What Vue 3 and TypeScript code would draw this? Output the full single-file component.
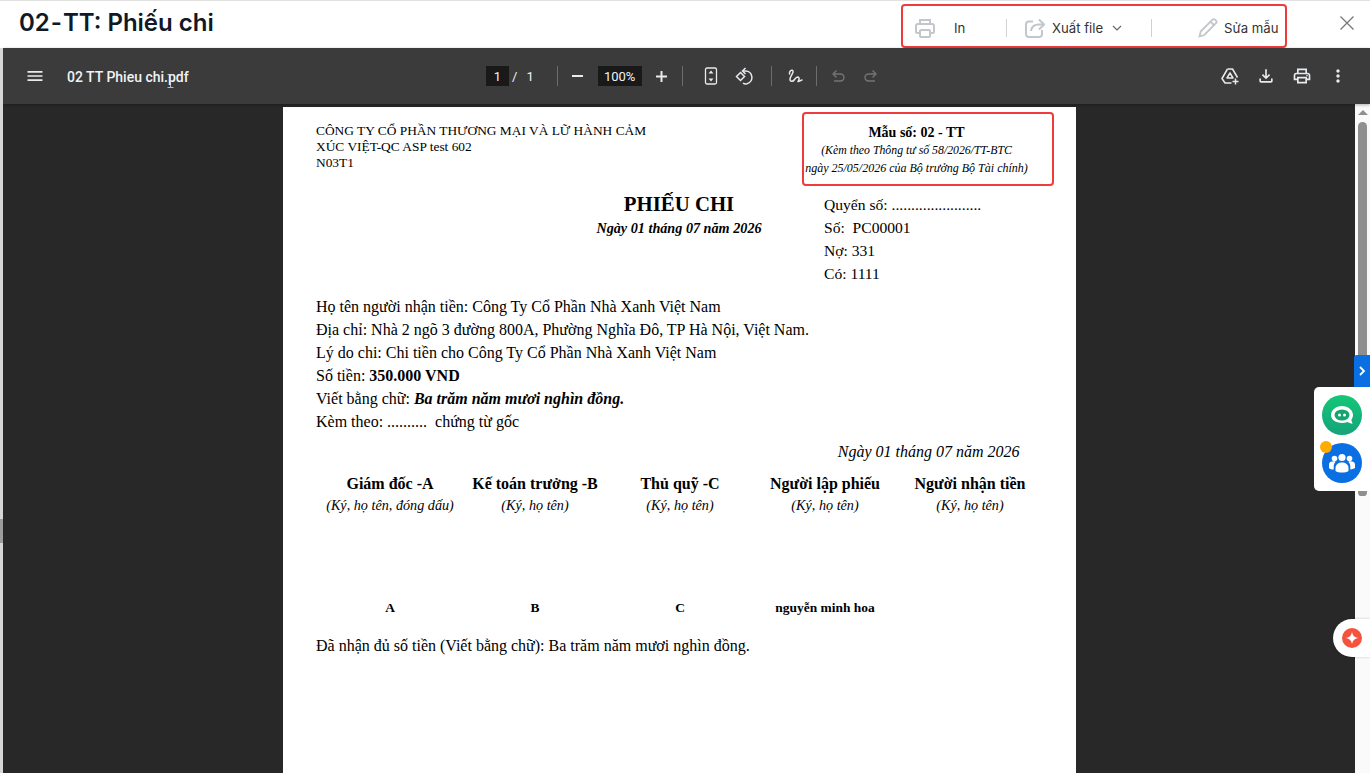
<template>
  <div class="app">
    <div class="modal">
      <header class="head">
        <h1 class="title">02<span class="dash">-</span>TT: Phiếu chi</h1>
        <div class="actions">
          <div class="act act-print">
            <svg class="act-icon" viewBox="0 0 20 20" width="20" height="20" fill="none" stroke="#c3c6ca" stroke-width="2">
              <path d="M5 6V2h10v4" />
              <path d="M5 15H2.500A1.500 1.500 0 0 1 1 13.500V8a2 2 0 0 1 2-2h14a2 2 0 0 1 2 2v5.500a1.500 1.500 0 0 1-1.500 1.500H15" />
              <rect x="5" y="12" width="10" height="7" rx="1" />
            </svg>
            <span class="act-in">In</span>
          </div>
          <i class="act-sep"></i>
          <div class="act act-export">
            <svg viewBox="0 0 20 20" width="20" height="20" fill="none" stroke="#c3c6ca" stroke-width="2">
              <path d="M8 3.500H4a3 3 0 0 0-3 3V16a3 3 0 0 0 3 3h10a3 3 0 0 0 3-3v-4" />
              <path d="M6 13c.5-4 3.500-6.500 8-6.500h4" />
              <path d="M14 1.500l5 5-5 5" />
            </svg>
            <span>Xuất file</span>
            <svg class="chev" viewBox="0 0 10 6" width="10" height="6" fill="none" stroke="#666" stroke-width="1.200">
              <path d="M1 1l4 4 4-4" />
            </svg>
          </div>
          <i class="act-sep"></i>
          <div class="act act-edit">
            <svg viewBox="0 0 20 20" width="20" height="20" fill="none" stroke="#c3c6ca" stroke-width="1.800">
              <path d="M1.500 18.500l1.200-5L14.500 1.700a1.800 1.800 0 0 1 2.500 0l1 1a1.800 1.800 0 0 1 0 2.500L6.300 17z" />
              <path d="M12.500 3.700l3.800 3.800" />
            </svg>
            <span>Sửa mẫu</span>
          </div>
        </div>
        <svg class="close" viewBox="0 0 14 14" width="14" height="14" fill="none" stroke="#777" stroke-width="1.300">
          <path d="M.5.500l13 13M13.500.500l-13 13" />
        </svg>
      </header>

      <div class="toolbar">
        <div class="tb-left">
          <svg class="ic-menu" viewBox="0 0 24 24" width="20" height="20" fill="#e8eaed">
            <path d="M3 18h18v-2H3v2zm0-5h18v-2H3v2zm0-7v2h18V6H3z" />
          </svg>
          <span class="filename">02 TT Phieu chi.pdf</span>
          <svg class="ibeam" viewBox="0 0 7 14" width="7" height="14" fill="none" stroke="#ddd" stroke-width="1">
            <path d="M.5.500h6M3.500.500v13M.5 13.500h6" />
          </svg>
        </div>
        <div class="tb-center">
          <span class="num-box page-box">1</span>
          <span class="slash">/</span>
          <span class="total">1</span>
          <i class="tb-sep sep-a"></i>
          <svg class="ic-minus" viewBox="0 0 11 12" width="11" height="12" fill="#e8eaed"><path d="M0 5h11v2H0z" /></svg>
          <span class="num-box zoom-box">100%</span>
          <svg class="ic-plus" viewBox="0 0 11 11" width="11" height="11" fill="#e8eaed"><path d="M0 4.500h4.500V0h2v4.500H11v2H6.500V11h-2V6.500H0z" /></svg>
          <i class="tb-sep sep-b"></i>
          <svg class="ic-fit" viewBox="0 0 14 18" width="14" height="18" fill="none" stroke="#e8eaed" stroke-width="1.300">
            <rect x="1.500" y="1" width="11" height="16" rx="1.500" />
            <path d="M7 3.500l2.500 3h-5zM7 14.500l2.500-3h-5z" fill="#e8eaed" stroke="none" />
          </svg>
          <svg class="ic-rotate" viewBox="0 0 18 18" width="18" height="18" fill="none" stroke="#e8eaed" stroke-width="1.500">
            <path d="M1.500 9.500l4-4 4 4-4 4z" />
            <path d="M8 4h2.500a6.500 6.500 0 0 1 1.500 12.800c-1.400.3-2.800.1-4-.6" />
            <path d="M10.500 1L7.500 4l3 3" />
          </svg>
          <i class="tb-sep sep-c"></i>
          <svg class="ic-draw" viewBox="0 0 16 16" width="16" height="16" fill="none" stroke="#e8eaed" stroke-width="1.500" stroke-linecap="round">
            <path d="M2.500 6C2 3 5 1 6 3c1 2-3 5-3 8s3 3 4.500.5C8.500 10 11 8 12 10c1 2-2 4-.5 3.500 1-.2 2.500-1.500 3.500-1.500" />
          </svg>
          <i class="tb-sep sep-d"></i>
          <svg class="ic-undo" viewBox="0 0 14 14" width="14" height="14" fill="none" stroke="#747474" stroke-width="1.400">
            <path d="M3 5h6.500a3.500 3.500 0 0 1 0 7H3" />
            <path d="M5.500 1.500L2 5l3.500 3.500" />
          </svg>
          <svg class="ic-redo" viewBox="0 0 14 14" width="14" height="14" fill="none" stroke="#747474" stroke-width="1.400">
            <path d="M11 5H4.500a3.500 3.500 0 0 0 0 7H11" />
            <path d="M8.500 1.500L12 5 8.500 8.500" />
          </svg>
        </div>
        <div class="tb-right">
          <svg viewBox="0 0 20 20" width="20" height="20" fill="none" stroke="#e8eaed" stroke-width="1.500" stroke-linejoin="round">
            <path d="M7.500 3h5l5 8.500" />
            <path d="M7.500 3L2 12.500 5 17h6.500" />
            <path d="M10 7l3 5H7z" />
            <path d="M15.500 12.500v6M12.500 15.500h6" />
          </svg>
          <svg viewBox="0 0 24 24" width="20" height="20" fill="#e8eaed">
            <path d="M18 15v3H6v-3H4v3c0 1.100.9 2 2 2h12c1.100 0 2-.9 2-2v-3h-2zm-1-4l-1.410-1.410L13 12.170V4h-2v8.170L8.410 9.590 7 11l5 5 5-5z" />
          </svg>
          <svg viewBox="0 0 24 24" width="20" height="20" fill="#e8eaed">
            <path d="M19 8h-1V3H6v5H5c-1.660 0-3 1.340-3 3v6h4v4h12v-4h4v-6c0-1.660-1.340-3-3-3zM8 5h8v3H8V5zm8 12v2H8v-4h8v2zm2-2v-2H6v2H4v-4c0-.55.45-1 1-1h14c.55 0 1 .45 1 1v4h-2z" />
            <circle cx="18" cy="11.500" r="1" />
          </svg>
          <svg viewBox="0 0 24 24" width="20" height="20" fill="#e8eaed">
            <path d="M12 8c1.100 0 2-.9 2-2s-.9-2-2-2-2 .9-2 2 .9 2 2 2zm0 2c-1.100 0-2 .9-2 2s.9 2 2 2 2-.9 2-2-.9-2-2-2zm0 6c-1.100 0-2 .9-2 2s.9 2 2 2 2-.9 2-2-.9-2-2-2z" />
          </svg>
        </div>
      </div>

      <div class="viewer">
        <div class="stage">
          <div class="page">
            <div class="doc-top">
              <div class="company">
                CÔNG TY CỔ PHẦN THƯƠNG MẠI VÀ LỮ HÀNH CẢM<br>
                XÚC VIỆT-QC ASP test 602<br>
                N03T1
              </div>
              <div class="form-no">
                <div class="form-no-title">Mẫu số: 02 - TT</div>
                <div class="form-no-line first">(Kèm theo Thông tư số 58/2026/TT-BTC</div>
                <div class="form-no-line">ngày 25/05/2026 của Bộ trưởng Bộ Tài chính)</div>
              </div>
            </div>

            <div class="doc-title-row">
              <div class="doc-title">
                <div class="doc-name">PHIẾU CHI</div>
                <div class="doc-date">Ngày 01 tháng 07 năm 2026</div>
              </div>
              <div class="doc-meta">
                <div>Quyển số: .......................</div>
                <div>Số:&nbsp; PC00001</div>
                <div>Nợ: 331</div>
                <div>Có: 1111</div>
              </div>
            </div>

            <div class="doc-body">
              <div>Họ tên người nhận tiền: Công Ty Cổ Phần Nhà Xanh Việt Nam</div>
              <div>Địa chỉ: Nhà 2 ngõ 3 đường 800A, Phường Nghĩa Đô, TP Hà Nội, Việt Nam.</div>
              <div>Lý do chi: Chi tiền cho Công Ty Cổ Phần Nhà Xanh Việt Nam</div>
              <div>Số tiền: <b>350.000 VND</b></div>
              <div>Viết bằng chữ: <b><i>Ba trăm năm mươi nghìn đồng.</i></b></div>
              <div>Kèm theo: ..........&nbsp; chứng từ gốc</div>
            </div>

            <div class="sign-date">Ngày 01 tháng 07 năm 2026</div>

            <div class="signs">
              <div v-for="s in signers" :key="s.role" class="sign">
                <div class="sign-role">{{ s.role }}</div>
                <div class="sign-hint">{{ s.hint }}</div>
                <div class="sign-name">{{ s.name }}</div>
              </div>
            </div>

            <div class="received">Đã nhận đủ số tiền (Viết bằng chữ): Ba trăm năm mươi nghìn đồng.</div>
          </div>
        </div>
        <div class="scrollbar">
          <i class="scroll-up"></i>
          <i class="scroll-thumb"></i>
        </div>
      </div>
    </div>

    <div class="side-tab">
      <svg viewBox="0 0 8 10" width="8" height="10" fill="none" stroke="#fff" stroke-width="1.800">
        <path d="M2 1l4 4-4 4" />
      </svg>
    </div>
    <div class="side-panel">
      <div class="bot">
        <svg viewBox="0 0 40 40" width="40" height="40">
          <path d="M9 20c0-5 5-9 11-9s11 4 11 9c0 1.800-.6 3.400-1.700 4.800l1.200 4.200-5.200-2c-1.500.6-3.200.9-5.300.9-6 0-11-3-11-7.900z" fill="#fff" />
          <ellipse cx="20" cy="20" rx="7.500" ry="5.500" fill="#14a571" />
          <circle cx="17.500" cy="20" r="1.500" fill="#fff" />
          <circle cx="22.500" cy="20" r="1.500" fill="#fff" />
        </svg>
      </div>
      <div class="team">
        <svg viewBox="0 0 40 40" width="40" height="40" fill="#fff">
          <circle cx="20" cy="14.500" r="3.600" />
          <circle cx="12.500" cy="15.500" r="2.800" />
          <circle cx="27.500" cy="15.500" r="2.800" />
          <path d="M13.500 28v-3c0-3.500 3-5.500 6.500-5.500s6.500 2 6.500 5.500v3c-1.500 1-4 1.500-6.500 1.500s-5-.5-6.500-1.500z" />
          <path d="M7 25v-3.500c0-2 2-3.200 4.500-3.200.8 0 1.500.1 2.200.4-1.300 1.300-2 3-2 5v2.800C9.500 26.500 8 26 7 25zM33 25v-3.500c0-2-2-3.200-4.500-3.200-.8 0-1.500.1-2.200.4 1.300 1.300 2 3 2 5v2.800c2.200-.5 3.700-1 4.700-1.500z" />
        </svg>
      </div>
      <i class="team-dot"></i>
    </div>
    <div class="spark-pill">
      <div class="spark">
        <svg viewBox="0 0 12 12" width="12" height="12" fill="#fff">
          <path d="M6 0c.5 3.500 2.500 5.500 6 6-3.500.5-5.500 2.500-6 6-.5-3.500-2.500-5.500-6-6 3.500-.5 5.500-2.500 6-6z" />
        </svg>
      </div>
    </div>
  </div>
</template>

<script setup lang="ts">
interface Signer {
  role: string;
  hint: string;
  name: string;
}

const signers: Signer[] = [
  { role: 'Giám đốc -A', hint: '(Ký, họ tên, đóng dấu)', name: 'A' },
  { role: 'Kế toán trưởng -B', hint: '(Ký, họ tên)', name: 'B' },
  { role: 'Thủ quỹ -C', hint: '(Ký, họ tên)', name: 'C' },
  { role: 'Người lập phiếu', hint: '(Ký, họ tên)', name: 'nguyễn minh hoa' },
  { role: 'Người nhận tiền', hint: '(Ký, họ tên)', name: '' },
];
</script>

<style>
html,
body {
  margin: 0;
  overflow: hidden;
}
</style>

<style scoped>
.app {
  position: relative;
  height: 100vh;
  box-sizing: border-box;
  padding: 1px 0 0 3px;
  background: linear-gradient(180deg, #e2e2e2 0 1px, #fff 1px 48px, #d6d6d6 48px 519px, #9d9d9d 519px 543px, #d6d6d6 543px);
  overflow: hidden;
  font-family: Inter, "Noto Sans", sans-serif;
}

.modal {
  height: 100%;
  display: flex;
  flex-direction: column;
  border-radius: 4px 4px 0 0;
  overflow: hidden;
}

.head {
  height: 47px;
  flex: none;
  display: flex;
  align-items: flex-start;
  padding: 0 16px;
  background: #fff;
}

.title {
  margin: 0;
  font-size: 24px;
  font-weight: 600;
  line-height: 44px;
  color: #111827;
}

.dash {
  padding: 0 1px;
}

.actions {
  margin-left: auto;
  box-sizing: border-box;
  width: 386px;
  height: 44px;
  margin-top: 3px;
  padding-top: 3px;
  display: flex;
  align-items: center;
  border: 2px solid #ef3b3b;
  border-radius: 4px;
  font-size: 13.2px;
  color: #333;
}

.act {
  display: flex;
  align-items: center;
  flex: none;
}

.act-print {
  width: 91px;
  padding-left: 12px;
}

.act-in {
  margin-left: 19px;
}

.act-sep {
  width: 1px;
  height: 18px;
  background: #d0d3d6;
  flex: none;
}

.act-export {
  width: 126px;
  padding-left: 18px;
  gap: 7px;
}

.chev {
  margin-left: 2px;
}

.act-edit {
  margin-left: 46px;
  gap: 6px;
}

.close {
  margin-left: 53px;
  margin-top: 15px;
  flex: none;
}

.toolbar {
  height: 56px;
  flex: none;
  display: grid;
  grid-template-columns: 483px auto 1fr;
  align-items: center;
  background: #3b3b3b;
  color: #f1f3f4;
  font-family: Roboto, "Liberation Sans", sans-serif;
  box-shadow: 0 1px 3px rgba(0, 0, 0, 0.3);
  position: relative;
  z-index: 1;
}

.tb-left {
  display: flex;
  align-items: center;
  position: relative;
  padding-left: 22px;
}

.filename {
  margin-left: 22px;
  padding-top: 1px;
  font-size: 14px;
  font-weight: 500;
  white-space: nowrap;
}

.ibeam {
  position: absolute;
  left: 164px;
  top: 8px;
  opacity: 0.8;
}

.tb-center {
  display: flex;
  align-items: center;
  font-size: 13px;
}

.num-box {
  display: flex;
  align-items: center;
  justify-content: center;
  height: 20px;
  background: #191919;
}

.page-box {
  width: 23px;
}

.slash {
  margin-left: 3px;
}

.total {
  margin-left: 9px;
}

.tb-sep {
  width: 1px;
  height: 20px;
  background: #6d6d6d;
  flex: none;
}

.sep-a {
  margin-left: 23px;
}

.ic-minus {
  margin-left: 14px;
}

.zoom-box {
  margin-left: 15px;
  width: 44px;
}

.ic-plus {
  margin-left: 14px;
}

.sep-b {
  margin-left: 15px;
}

.ic-fit {
  margin-left: 21px;
}

.ic-rotate {
  margin-left: 17px;
}

.sep-c {
  margin-left: 18px;
}

.ic-draw {
  margin-left: 15px;
}

.sep-d {
  margin-left: 13px;
}

.ic-undo {
  margin-left: 14px;
}

.ic-redo {
  margin-left: 19px;
}

.tb-right {
  display: flex;
  align-items: center;
  justify-content: flex-end;
  gap: 16px;
  padding-right: 22px;
}

.viewer {
  flex: 1;
  min-height: 0;
  display: flex;
  background: #282828;
}

.stage {
  flex: 1;
  min-width: 0;
  display: flex;
  justify-content: center;
  padding-top: 3px;
}

.page {
  width: 793px;
  flex: none;
  box-sizing: border-box;
  padding: 5px 22px 0 33.5px;
  background: #fff;
  color: #000;
  font-family: "Liberation Serif", "Times New Roman", serif;
  font-size: 16px;
}

.doc-top {
  display: flex;
  justify-content: space-between;
}

.company {
  padding-top: 11px;
  font-size: 13.4px;
  line-height: 16px;
  width: 350px;
}

.form-no {
  box-sizing: border-box;
  width: 252px;
  height: 74px;
  padding: 10px 22px 0 0;
  border: 2px solid #ef3b3b;
  border-radius: 4px;
  text-align: center;
}

.form-no-title {
  font-size: 14px;
  font-weight: bold;
  line-height: 17px;
}

.form-no-line {
  font-size: 12px;
  font-style: italic;
  line-height: 18px;
  white-space: nowrap;
}

.form-no-line.first {
  font-size: 11.8px;
}

.doc-title-row {
  display: grid;
  grid-template-columns: 218px 290px auto;
  margin-top: 7px;
}

.doc-title {
  grid-column: 2;
  text-align: center;
}

.doc-name {
  font-size: 20.8px;
  font-weight: bold;
  line-height: 22px;
}

.doc-date {
  margin-top: 1px;
  font-size: 14.2px;
  font-weight: bold;
  font-style: italic;
  line-height: 24px;
}

.doc-meta {
  font-size: 15.6px;
  line-height: 23px;
}

.doc-body {
  margin-top: 10px;
  line-height: 23px;
}

.sign-date {
  margin-top: 9px;
  padding-right: 34px;
  text-align: right;
  font-style: italic;
  line-height: 20px;
}

.signs {
  display: grid;
  grid-template-columns: repeat(5, 145px);
  margin-top: 11px;
  margin-left: 1.5px;
  text-align: center;
}

.sign-role {
  font-weight: bold;
  line-height: 22px;
  white-space: nowrap;
}

.sign-hint {
  font-size: 14.2px;
  font-style: italic;
  line-height: 20px;
}

.sign-name {
  height: 20px;
  margin-top: 83px;
  font-size: 13.45px;
  font-weight: bold;
  line-height: 20px;
}

.received {
  margin-top: 16px;
  line-height: 23px;
}

.scrollbar {
  width: 15px;
  flex: none;
  position: relative;
  background: #fafafa;
}

.scroll-up {
  position: absolute;
  top: 6px;
  left: 3px;
  border-left: 5px solid transparent;
  border-right: 5px solid transparent;
  border-bottom: 5px solid #8f8f8f;
}

.scroll-thumb {
  position: absolute;
  top: 18px;
  left: 3px;
  width: 9px;
  height: 374px;
  border-radius: 5px 5px 4px 4px;
  background: #8f8f8f;
}

.side-tab {
  position: absolute;
  top: 355px;
  right: 0;
  width: 16px;
  height: 32px;
  display: flex;
  align-items: center;
  justify-content: center;
  background: #0a6fe3;
  border-radius: 3px 0 0 0;
}

.side-panel {
  position: absolute;
  top: 387px;
  right: 0;
  width: 56px;
  height: 104px;
  box-sizing: border-box;
  padding: 8px 0 0 8px;
  display: flex;
  flex-direction: column;
  gap: 8px;
  background: #fff;
  border-radius: 5px 0 0 5px;
}

.bot,
.team {
  width: 40px;
  height: 40px;
  border-radius: 50%;
}

.bot {
  background: linear-gradient(180deg, #14c777, #15a37a);
}

.team {
  background: #0a6fe3;
}

.team-dot {
  position: absolute;
  top: 54px;
  left: 6px;
  width: 12px;
  height: 12px;
  border-radius: 50%;
  background: #ffab00;
}

.spark-pill {
  position: absolute;
  top: 619px;
  right: 0;
  width: 37px;
  height: 38px;
  box-sizing: border-box;
  padding: 9px 0 0 9px;
  background: #fff;
  border-radius: 19px 0 0 19px;
  box-shadow: 0 0 3px rgba(0, 0, 0, 0.2);
}

.spark {
  width: 20px;
  height: 20px;
  display: flex;
  align-items: center;
  justify-content: center;
  border-radius: 50%;
  background: #f4533e;
}
</style>
